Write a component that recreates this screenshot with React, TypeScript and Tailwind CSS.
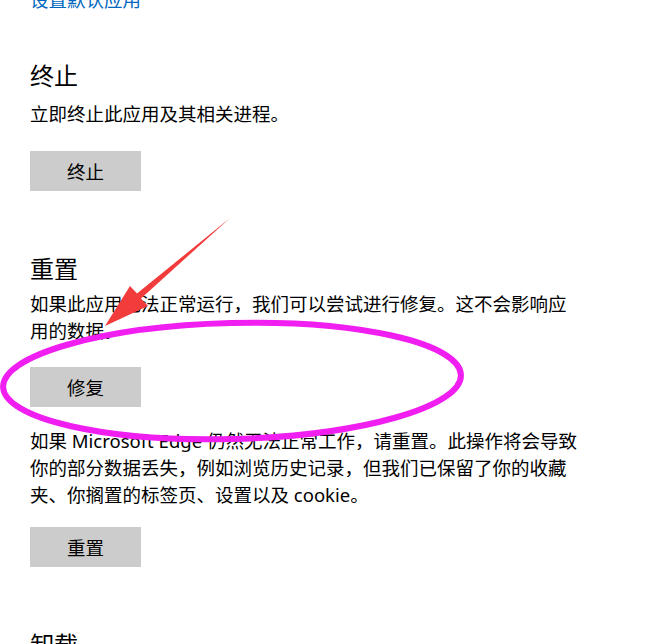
import React from 'react'

const FONT = '"Noto Sans", "Noto Sans CJK SC", sans-serif'

function GrayButton({ label }: { label: string }) {
  return (
    <button className="flex h-[40px] w-[111px] items-center justify-center bg-[#cccccc] text-[18.5px] leading-[27px] text-black">
      {label}
    </button>
  )
}

function Annotations() {
  // 截图上的标注：红色箭头 + 洋红色椭圆
  return (
    <svg
      className="pointer-events-none absolute left-0 top-0"
      width={650}
      height={644}
      viewBox="0 0 650 644"
    >
      <ellipse
        cx={232}
        cy={381}
        rx={229}
        ry={58}
        fill="none"
        stroke="#f01ef0"
        strokeWidth={6}
        transform="rotate(-1.5 232 381)"
      />
      <polygon
        points="230,218 141,298.5 148,306 105,326 130,286 137,293.5"
        fill="#f23b3b"
      />
    </svg>
  )
}

export default function App() {
  return (
    <div
      className="relative flex h-[644px] w-[650px] flex-col items-start overflow-hidden bg-white pl-[30px] text-black"
      style={{ fontFamily: FONT }}
    >
      <a className="-mt-[14px] block text-[18.5px] leading-[27px] text-[#0067c0]">设置默认应用</a>

      <h2 className="mt-[47px] text-[24px] font-normal leading-[32px]">终止</h2>
      <p className="mt-[8px] text-[18.5px] leading-[27px]">立即终止此应用及其相关进程。</p>
      <div className="mt-[24px]">
        <GrayButton label="终止" />
      </div>

      <h2 className="mt-[62px] text-[24px] font-normal leading-[32px]">重置</h2>
      <p className="mt-[5px] whitespace-nowrap text-[18.5px] leading-[27px]">
        如果此应用无法正常运行，我们可以尝试进行修复。这不会影响应
        <br />
        用的数据。
      </p>
      <div className="mt-[23px]">
        <GrayButton label="修复" />
      </div>
      <p className="mt-[20px] whitespace-nowrap text-[18.5px] leading-[27px]">
        如果 Microsoft Edge 仍然无法正常工作，请重置。此操作将会导致
        <br />
        你的部分数据丢失，例如浏览历史记录，但我们已保留了你的收藏
        <br />
        夹、你搁置的标签页、设置以及 cookie。
      </p>
      <div className="mt-[19px]">
        <GrayButton label="重置" />
      </div>

      <h2 className="mt-[62px] text-[24px] font-normal leading-[32px]">卸载</h2>

      <Annotations />
    </div>
  )
}
